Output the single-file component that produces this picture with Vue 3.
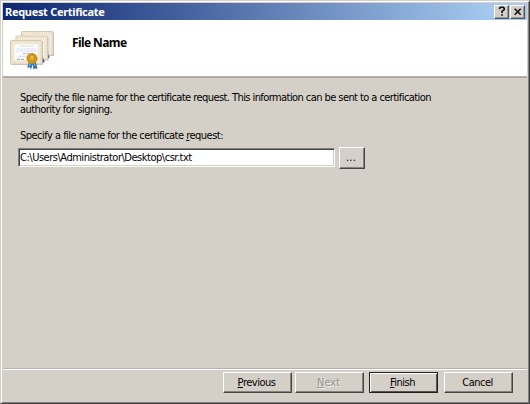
<script setup>
import { ref } from 'vue'

const fileName = ref('C:\\Users\\Administrator\\Desktop\\csr.txt')
</script>

<template>
  <div class="window">
    <header class="titlebar">
      <span class="title">Request Certificate</span>
      <div class="controls">
        <button class="control" aria-label="Help">
          <svg width="12" height="11" viewBox="0 0 12 11"><path d="M3.6 3.3V2.2L4.6 1.3h2.6l1 .9v1.4L6 5.3V7M5.1 9h1.8" fill="none" stroke="#111" stroke-width="1.6" /></svg>
        </button>
        <button class="control" aria-label="Close">
          <svg width="12" height="10" viewBox="0 0 12 10"><path d="M2.7 1.8l6 6M8.7 1.8l-6 6" fill="none" stroke="#111" stroke-width="1.6" /></svg>
        </button>
      </div>
    </header>

    <section class="banner">
      <svg class="certs" width="46" height="42" viewBox="0 0 46 42">
        <defs>
          <g id="sheet">
            <rect x="1" y="1" width="32" height="24" rx="1" fill="#8b8577" opacity=".55" />
            <rect x=".5" y=".5" width="31.5" height="23.5" rx="1" fill="#f6eddc" stroke="#d5c8b1" />
            <rect x="2" y="2" width="28.5" height="20.5" fill="none" stroke="#e6d8bf" stroke-width="1.4" stroke-dasharray="1.3 1" />
            <rect x="4" y="4" width="24.5" height="16.5" fill="#fcfcfd" stroke="#e6dcc8" stroke-width=".6" />
          </g>
        </defs>
        <use href="#sheet" x="11" y="0" />
        <path d="M38 23.5l1.7 2.5-1 1.5-1.2-1z" fill="#3d6797" />
        <use href="#sheet" x="5.5" y="4.5" />
        <path d="M32.5 26l2.2 4.5-1.2 1.5-1.5-1.5z" fill="#315b91" />
        <use href="#sheet" x="0" y="9" />
        <g fill="none" stroke-width=".8">
          <path d="M10 15.2h14" stroke="#c5cdea" stroke-dasharray="2 .7" />
          <path d="M6 18h20M6 20h22" stroke="#cbd4f2" stroke-dasharray="3 .6" />
          <path d="M13 22.7h7" stroke="#969aa8" stroke-dasharray="2 .5" />
          <path d="M8 25.3h10" stroke="#c9d1ea" />
          <path d="M7 28.3h8" stroke="#7785a8" stroke-dasharray="3 1" />
        </g>
        <path d="M19 31l-1.9 5.5 2.5-.3 1.5 2L23.2 32z" fill="#3478c4" />
        <path d="M22.5 31l1 7.5 1.8-1.2 2.2.6L25.5 30z" fill="#246bbb" />
        <path d="M20.5 32l-1 3M24 32l1 3" stroke="#8bbcea" stroke-width="1" />
        <circle cx="22" cy="27.5" r="5.2" fill="#d49b1c" stroke="#ad7411" stroke-width=".8" stroke-dasharray="1.2 .5" />
        <circle cx="22" cy="27.2" r="3" fill="#e0aa2d" stroke="#bd8014" stroke-width=".8" />
        <path d="M20 26.5c1-1.6 2.3-1.5 3-.7" fill="none" stroke="#f8dd79" />
      </svg>
      <h1 class="heading">File Name</h1>
    </section>

    <main class="content">
      <p class="description">
        <span class="line first">Specify the file name for the certificate request. This information can be sent to a certification</span>
        <span class="line second">authority for signing.</span>
      </p>
      <label class="label" for="filename">Specify a file name for the certificate <u>r</u>equest:</label>
      <div class="file-row">
        <input id="filename" v-model="fileName" class="file-input" type="text" spellcheck="false" />
        <button class="button browse">...</button>
      </div>
    </main>

    <footer class="footer">
      <button class="button previous"><span><u>P</u>revious</span></button>
      <button class="button next" disabled><span><u>N</u>ext</span></button>
      <button class="button finish"><span><u>F</u>inish</span></button>
      <button class="button cancel"><span>Cancel</span></button>
    </footer>
  </div>
</template>

<style>
body { overflow: hidden; background: #d4d0c8; }
</style>

<style scoped>
* { box-sizing: border-box; }
.window {
  display: flex;
  flex-direction: column;
  width: 530px;
  height: 404px;
  padding: 1px 1px 2px;
  background: #d4d0c8;
  border: 1px solid #d4d0c8;
  border-right-color: #404040;
  border-bottom-color: #404040;
  box-shadow: inset 1px 1px #fff, inset -1px -1px #808080;
  color: #000;
  font-family: "DejaVu Sans Condensed", "DejaVu Sans", sans-serif;
  font-stretch: condensed;
  font-size: 11px;
}
.titlebar {
  display: flex;
  align-items: center;
  justify-content: space-between;
  height: 17px;
  flex: none;
  margin: 1px 1px 0;
  padding: 0 2px;
  background: linear-gradient(90deg, #0c2670, #a6caf0 94%);
}
.title { color: #fff; font: bold 11px/16px "Noto Sans", sans-serif; letter-spacing: -.31px; white-space: nowrap; }
.controls { display: flex; gap: 1px; }
.control {
  display: grid;
  place-items: center;
  width: 15px;
  height: 14px;
  padding: 0;
  background: #d4d0c8;
  border: 1px solid;
  border-color: #fff #555 #555 #fff;
  box-shadow: inset -1px -1px #999;
}
.banner {
  display: flex;
  flex: none;
  height: 58px;
  margin: 0 1px;
  padding: 11px 7px 0;
  background: #fff;
  border-bottom: 1px solid #aaa7a2;
  box-shadow: inset 0 -1px #b5b2ad;
}
.certs { flex: none; }
.heading { margin: 4px 0 0 16px; font: bold 12px/16px "Noto Sans", sans-serif; letter-spacing: -.6px; white-space: nowrap; }
.content { flex: 1; padding: 14px 17px 0; }
.description { margin: 0; padding-left: 1px; }
.line { display: block; height: 12px; line-height: 12px; white-space: nowrap; }
.first { letter-spacing: -.57px; }
.second { letter-spacing: -.54px; }
.label { display: block; margin: 13px 0 0 1px; height: 14px; line-height: 14px; letter-spacing: -.52px; white-space: nowrap; }
u { text-decoration: underline; text-underline-offset: 1px; text-decoration-thickness: 1px; }
.file-row { display: flex; align-items: center; gap: 4px; margin: 4px 0 0 -2px; }
.file-row { margin-left: -1px; align-items: flex-start; }
.file-input {
  width: 317px;
  height: 19px;
  margin-top: 1px;
  padding: 0 1px 1px;
  color: #000;
  background: #fff;
  border: 1px solid;
  border-color: #808080 #fff #fff #808080;
  outline: 0;
  box-shadow: inset 1px 1px #444, inset -1px -1px #d4d0c8;
  font: inherit;
  letter-spacing: -.48px;
}
.button {
  display: flex;
  align-items: center;
  justify-content: center;
  width: 69px;
  height: 21px;
  padding: 0 2px 1px 0;
  color: #000;
  background: #d4d0c8;
  border: 1px solid;
  border-color: #fff #454545 #454545 #fff;
  box-shadow: inset -1px -1px #85817b;
  font: inherit;
  letter-spacing: -.5px;
  white-space: nowrap;
}
.browse { width: 26px; height: 22px; letter-spacing: .2px; }
.button:disabled { color: #96938d; text-shadow: 1px 1px #eee; }
.footer {
  display: flex;
  flex: none;
  height: 32px;
  margin: 0 1px;
  padding: 2px 0 0 220px;
  border-top: 1px solid #fff;
  box-shadow: 0 -1px #b6b2ab;
}
.next { margin-left: 3px; letter-spacing: 0; }
.finish { margin-left: 5px; border-color: #222; box-shadow: inset 1px 1px #fff, inset -1px -1px #555; }
.cancel { margin-left: 6px; }
</style>
